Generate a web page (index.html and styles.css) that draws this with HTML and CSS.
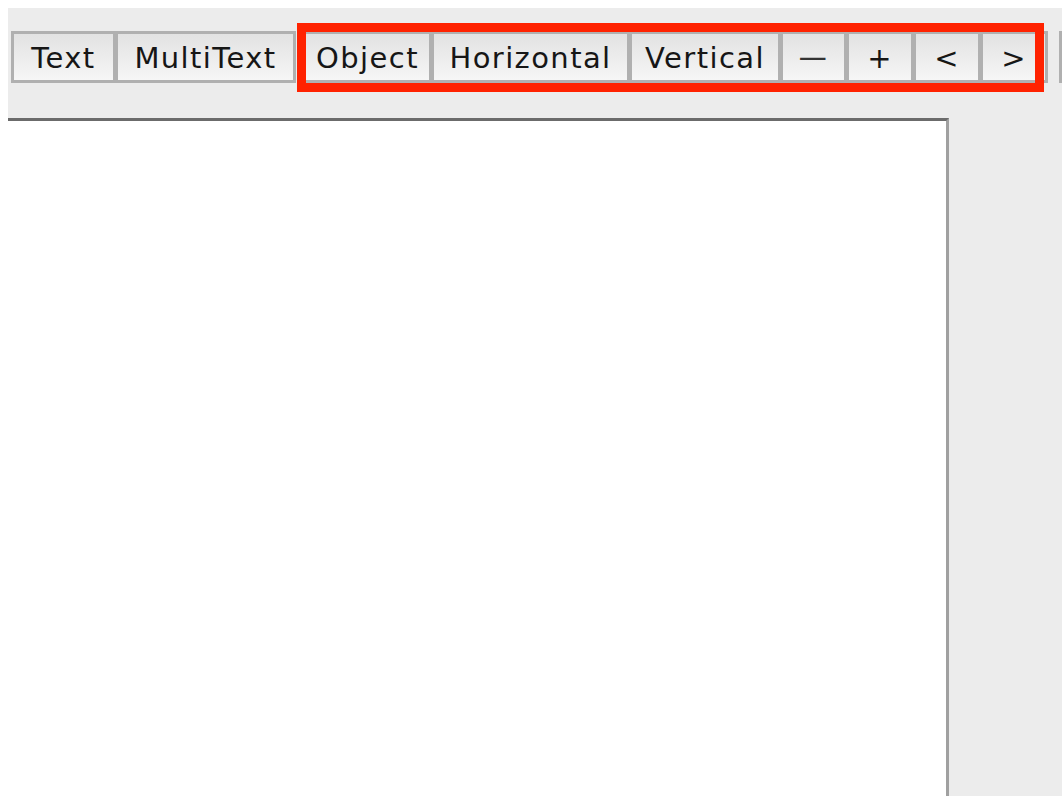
FILE: index.html
```html
<!DOCTYPE html>
<html lang="en">
<head>
<meta charset="utf-8">
<title>Editor</title>
<link rel="stylesheet" href="styles.css">
</head>
<body>
<div class="app">
  <div class="toolbar-row">
    <div class="group">
      <button class="btn w-text">Text</button>
      <button class="btn w-multi">MultiText</button>
    </div>
    <div class="group group-marked">
      <button class="btn w-object">Object</button>
      <button class="btn w-horiz">Horizontal</button>
      <button class="btn w-vert">Vertical</button>
      <button class="btn w-sym"><span class="wide">&minus;</span></button>
      <button class="btn w-sym2">+</button>
      <button class="btn w-sym2">&lt;</button>
      <button class="btn w-sym2">&gt;</button>
    </div>
    <div class="group group-more">
      <button class="btn w-more"></button>
    </div>
  </div>
  <div class="workspace">
    <div class="canvas"></div>
    <div class="side"></div>
  </div>
</div>
</body>
</html>
```

FILE: styles.css
```css
html, body {
  height: 100%;
}

body {
  margin: 8px 0 0 8px;
  background: #ffffff;
  overflow: hidden;
  font-family: "DejaVu Sans", "Liberation Sans", sans-serif;
}

.app {
  display: flex;
  flex-direction: column;
  height: 788px;
  width: 1054px;
  overflow: hidden;
  background: #ececec;
}

.toolbar-row {
  display: flex;
  align-items: flex-start;
  height: 110px;
  box-sizing: border-box;
  padding: 23px 0 0 3px;
  flex: none;
}

.group {
  display: flex;
  position: relative;
  flex: none;
}

.group + .group {
  margin-left: 7px;
}

.group-more {
  margin-left: 11px !important;
}

/* highlight frame drawn around the object tools */
.group-marked::after {
  content: "";
  position: absolute;
  left: -6px;
  top: -8px;
  width: 747px;
  height: 69px;
  box-sizing: border-box;
  border: 9px solid #ff2200;
  pointer-events: none;
}

.btn {
  height: 52px;
  flex: none;
  box-sizing: border-box;
  border: 3px solid #b0b0b0;
  margin: 0 0 0 -1px;
  padding: 2px 0 0 0;
  background: linear-gradient(to bottom, #e2e2e2 0%, #f6f6f6 100%);
  font-family: "DejaVu Sans", "Liberation Sans", sans-serif;
  font-size: 29px;
  letter-spacing: 1.4px;
  color: #161616;
  text-align: center;
  line-height: 44px;
  white-space: nowrap;
}

.btn:first-child {
  margin-left: 0;
}

.wide {
  display: inline-block;
  transform: scaleX(1.4);
  color: #333333;
}

.w-text { width: 105px; }
.w-multi { width: 181px; }
.w-object { width: 129px; }
.w-horiz { width: 199px; }
.w-vert { width: 152px; }
.w-sym { width: 67px; }
.w-sym2 { width: 68px; }
.w-more { width: 60px; }

.workspace {
  flex: 1;
  display: flex;
  min-height: 0;
}

.canvas {
  width: 941px;
  flex: none;
  box-sizing: border-box;
  background: #ffffff;
  border-top: 3px solid #6b6b6b;
  border-right: 3px solid #a0a0a0;
}

.side {
  flex: 1;
}
```
